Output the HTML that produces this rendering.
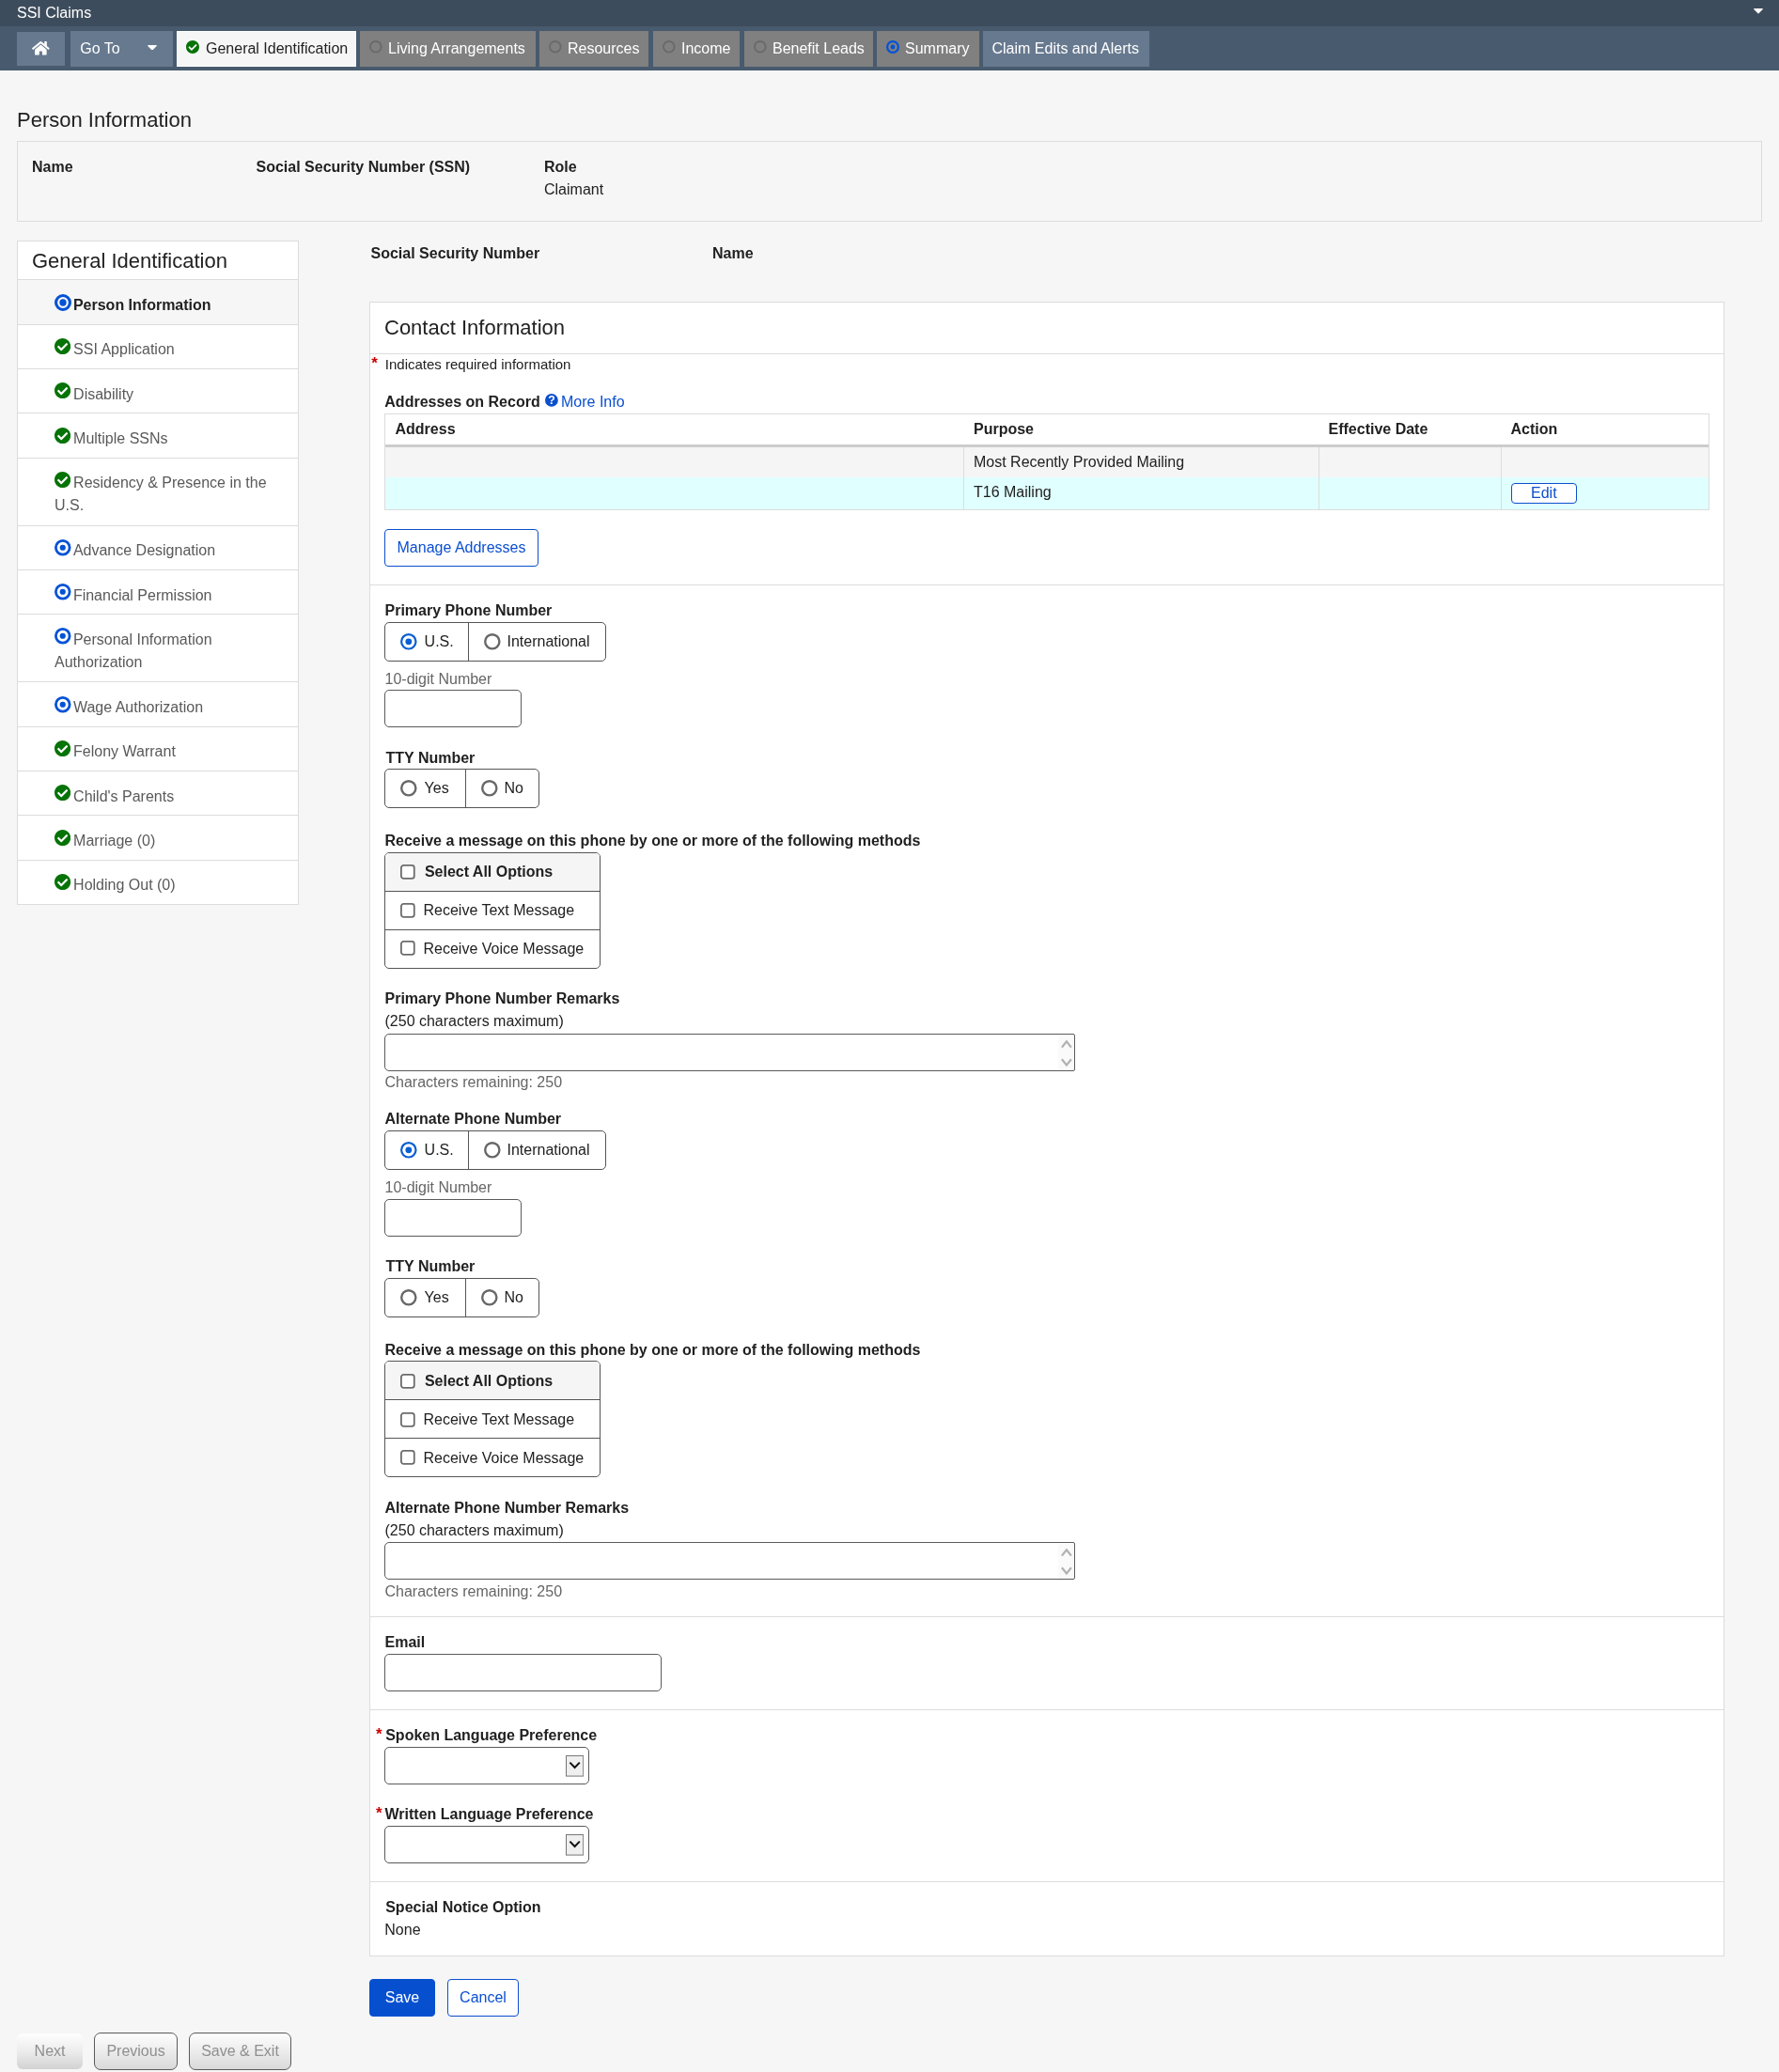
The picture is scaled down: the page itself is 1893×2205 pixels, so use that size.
<!DOCTYPE html>
<html lang="en">
<head>
<meta charset="utf-8">
<title>SSI Claims</title>
<style>
*{box-sizing:border-box;}
html,body{margin:0;padding:0;}
#page{position:absolute;left:0;top:0;width:1893px;height:2205px;will-change:transform;}
body{width:1893px;height:2205px;overflow:hidden;background:#f6f6f6;font-family:"Liberation Sans",Arial,sans-serif;font-size:16px;line-height:24px;color:#212121;position:relative;}
a{color:#0b4fcf;text-decoration:none;}
b,strong,.b{font-weight:700;}
.abs{position:absolute;}
#topbar{position:absolute;left:0;top:0;width:1893px;height:28px;background:#3d4c5c;color:#fff;}
#topbar .ttl{position:absolute;left:18px;top:2px;line-height:24px;}
#topbar .car{position:absolute;left:1866.3px;top:9.2px;}
#nav{position:absolute;left:0;top:28px;width:1893px;height:47px;background:#485a6d;}
.tab{position:absolute;top:5px;height:38px;line-height:24px;color:#fff;background:#808080;white-space:nowrap;font-size:16px;}
.tab.btn{background:#67798f;}
.tab.act{background:#f6f6f6;color:#212121;border:1px solid #fff;}
.tab.act .ic,.tab.act .tx{margin:-1px 0 0 -1px;}
.tab .ic{position:absolute;top:0;left:0;}
.tab .tx{position:absolute;top:7px;}
h1{position:absolute;left:18px;top:112.3px;margin:0;font-size:22px;font-weight:400;line-height:32px;color:#212121;}
#pbox{position:absolute;left:18px;top:150px;width:1857px;height:85.5px;border:1px solid #dcdcdc;background:#f6f6f6;}
#pbox div{position:absolute;white-space:nowrap;}
#side{position:absolute;left:18px;top:256px;width:300px;background:#fff;border:1px solid #dcdcdc;}
#side h2{margin:0;font-size:22px;font-weight:400;line-height:32px;padding:4.5px 15px 4px 15px;height:40.4px;color:#212121;}
#side .it{border-top:1px solid #dcdcdc;padding:14.6px 22px 7.72px 39px;color:#595959;position:relative;}
#side .it.dbl{padding-bottom:8.5px;}
#side .it.cur{background:#f6f6f6;color:#212121;font-weight:700;}
#side .it .ico{display:inline-block;vertical-align:top;margin:-0.4px 2.9px 0 0;}
#panel{position:absolute;left:393px;top:321px;width:1442px;height:1760.5px;background:#fff;border:1px solid #dcdcdc;}
.rule{position:absolute;left:394px;width:1440px;height:1px;background:#dcdcdc;}
.lbl{position:absolute;left:409.5px;font-weight:700;white-space:nowrap;line-height:24px;}
.txt{position:absolute;left:409.5px;white-space:nowrap;line-height:24px;}
.gray{color:#666;}
.req{position:absolute;color:#c00;font-weight:700;font-size:16px;line-height:24px;}
.grp{position:absolute;left:409px;height:41.5px;border:1px solid #555;border-radius:5px;background:#fff;display:flex;}
.grp .c{position:relative;height:100%;padding:0 16px;display:flex;align-items:center;white-space:nowrap;}
.grp .c+.c{border-left:1px solid #555;}
.rad{display:block;margin-right:7.8px;flex:none;margin-left:0.2px;position:relative;top:0.1px;}
.grp .c2 .rad{margin-right:7.1px;}
.inp{position:absolute;left:409px;height:39.5px;border:1px solid #5a5a5a;border-radius:5px;background:#fff;}
.inp.ta{border-top-right-radius:2px;border-bottom-right-radius:2px;overflow:hidden;}
.cbg{position:absolute;left:409px;width:229.8px;height:123.3px;border:1px solid #555;border-radius:5px;background:#fff;overflow:hidden;}
.cbg .r{height:41.2px;padding-left:16.3px;display:flex;align-items:center;white-space:nowrap;}
.cbg .r:last-child{height:40.6px;}
.cbg .r+.r{border-top:1px solid #555;}
.cbg .r.h{background:#f5f5f5;font-weight:700;height:39.4px;}
.cb{display:block;margin-right:8.5px;flex:none;position:relative;top:-0.4px;}
.cbg .r.h .cb{margin-right:9.9px;}
.cbg.alt .r{padding-top:1.8px;}
.btn2{position:absolute;border:1px solid #0b4fcf;border-radius:4px;background:#fff;color:#0b4fcf;text-align:center;white-space:nowrap;}
.gbtn{position:absolute;top:2163px;height:39.7px;line-height:37.7px;border:1px solid #5a5a5a;border-radius:7px;color:#8f8f8f;text-align:center;background:linear-gradient(#fefefe,#d9d9d9);font-size:16px;}

</style>
</head>
<body>
<div id="page">
<div id="topbar"><span class="ttl">SSI Claims</span><svg class="car" style="" width="10" height="5.56" viewBox="8 192 304 169"><path fill="#fff" d="M31.3 192h257.3c17.8 0 26.7 21.5 14.1 34.1L174.1 354.8c-7.800 7.800-20.500 7.800-28.300 0L17.200 226.100C4.600 213.500 13.500 192 31.300 192z"/></svg></div>
<div id="nav">
  <div class="tab btn" style="left:18px;width:51px;top:6px;height:36px;"><svg class="ic" style="left:15.96px;top:8.8px" width="18.72" height="16.64" viewBox="0 0 576 512"><path fill="#fff" d="M280.37 148.26L96 300.11V464a16 16 0 0 0 16 16l112.06-.29a16 16 0 0 0 15.92-16V368a16 16 0 0 1 16-16h64a16 16 0 0 1 16 16v95.64a16 16 0 0 0 16 16.05L464 480a16 16 0 0 0 16-16V300L295.67 148.26a12.190 12.190 0 0 0-15.3 0zM571.6 251.47L488 182.56V44.05a12 12 0 0 0-12-12h-56a12 12 0 0 0-12 12v72.61L318.47 43a48 48 0 0 0-61 0L4.34 251.47a12 12 0 0 0-1.6 16.9l25.5 31A12 12 0 0 0 45.150 301l235.22-193.74a12.190 12.190 0 0 1 15.3 0L530.9 301a12 12 0 0 0 16.9-1.6l25.5-31a12 12 0 0 0-1.7-16.930z"/></svg></div>
  <div class="tab btn" style="left:75px;width:109px;"><span class="tx" style="left:10.3px">Go To</span><svg class="ic" style="left:81.5px;top:14.6px" width="10" height="5.56" viewBox="8 192 304 169"><path fill="#fff" d="M31.3 192h257.3c17.8 0 26.7 21.5 14.1 34.1L174.1 354.8c-7.800 7.800-20.500 7.800-28.300 0L17.200 226.100C4.600 213.500 13.500 192 31.300 192z"/></svg></div>
  <div class="tab act" style="left:188px;width:191px;"><svg class="ic" style="left:9.75px;top:10.15px" width="14" height="14" viewBox="8 8 496 496"><path fill="#067306" d="M504 256c0 136.967-111.033 248-248 248S8 392.967 8 256 119.033 8 256 8s248 111.033 248 248zM227.314 387.314l184-184c6.248-6.248 6.248-16.379 0-22.627l-22.627-22.627c-6.248-6.249-16.379-6.249-22.628 0L216 308.118l-70.059-70.059c-6.248-6.248-16.379-6.248-22.628 0l-22.627 22.627c-6.248 6.248-6.248 16.379 0 22.627l104 104c6.249 6.249 16.379 6.249 22.628.001z"/></svg><span class="tx" style="left:31px">General Identification</span></div>
  <div class="tab" style="left:383px;width:187px;"><svg class="ic" style="overflow:visible;left:10.1px;top:10.2px" width="13.6" height="13.6" viewBox="0 0 13.6 13.6"><circle cx="6.8" cy="6.8" r="5.850" fill="none" stroke="#696969" stroke-width="1.9"/></svg><span class="tx" style="left:30px">Living Arrangements</span></div>
  <div class="tab" style="left:574px;width:116px;"><svg class="ic" style="overflow:visible;left:10.1px;top:10.2px" width="13.6" height="13.6" viewBox="0 0 13.6 13.6"><circle cx="6.8" cy="6.8" r="5.850" fill="none" stroke="#696969" stroke-width="1.9"/></svg><span class="tx" style="left:30px">Resources</span></div>
  <div class="tab" style="left:695px;width:92.2px;"><svg class="ic" style="overflow:visible;left:10.1px;top:10.2px" width="13.6" height="13.6" viewBox="0 0 13.6 13.6"><circle cx="6.8" cy="6.8" r="5.850" fill="none" stroke="#696969" stroke-width="1.9"/></svg><span class="tx" style="left:30px">Income</span></div>
  <div class="tab" style="left:792px;width:137px;"><svg class="ic" style="overflow:visible;left:10.1px;top:10.2px" width="13.6" height="13.6" viewBox="0 0 13.6 13.6"><circle cx="6.8" cy="6.8" r="5.850" fill="none" stroke="#696969" stroke-width="1.9"/></svg><span class="tx" style="left:30px">Benefit Leads</span></div>
  <div class="tab" style="left:933px;width:109px;"><svg class="ic" style="overflow:visible;left:10px;top:10px" width="14" height="14" viewBox="0 0 14 14"><circle cx="7.0" cy="7.0" r="5.900" fill="none" stroke="#0452d6" stroke-width="2.2"/><circle cx="7.0" cy="7.0" r="2.45" fill="#0452d6"/></svg><span class="tx" style="left:30px">Summary</span></div>
  <div class="tab btn" style="left:1046px;width:177px;"><span class="tx" style="left:9.5px">Claim Edits and Alerts</span></div>
</div>

<h1>Person Information</h1>
<div id="pbox">
  <div class="b" style="left:15px;top:14.5px">Name</div>
  <div class="b" style="left:253.5px;top:14.5px">Social Security Number (SSN)</div>
  <div class="b" style="left:560px;top:14.5px">Role</div>
  <div style="left:560px;top:38.5px">Claimant</div>
</div>

<div id="side">
  <h2>General Identification</h2>
  <div class="it cur"><svg class="ico" style="overflow:visible;margin-left:-0.2px;margin-right:2.1px;margin-top:-0.3px;margin-bottom:-0.5px" width="18" height="18" viewBox="0 0 18 18"><circle cx="9.0" cy="9.0" r="7.450" fill="none" stroke="#0452d6" stroke-width="3.1"/><circle cx="9.0" cy="9.0" r="3.65" fill="#0452d6"/></svg>Person Information</div>
  <div class="it"><svg class="ico" style="" width="17.2" height="17.2" viewBox="8 8 496 496"><path fill="#067306" d="M504 256c0 136.967-111.033 248-248 248S8 392.967 8 256 119.033 8 256 8s248 111.033 248 248zM227.314 387.314l184-184c6.248-6.248 6.248-16.379 0-22.627l-22.627-22.627c-6.248-6.249-16.379-6.249-22.628 0L216 308.118l-70.059-70.059c-6.248-6.248-16.379-6.248-22.628 0l-22.627 22.627c-6.248 6.248-6.248 16.379 0 22.627l104 104c6.249 6.249 16.379 6.249 22.628.001z"/></svg>SSI Application</div>
  <div class="it"><svg class="ico" style="" width="17.2" height="17.2" viewBox="8 8 496 496"><path fill="#067306" d="M504 256c0 136.967-111.033 248-248 248S8 392.967 8 256 119.033 8 256 8s248 111.033 248 248zM227.314 387.314l184-184c6.248-6.248 6.248-16.379 0-22.627l-22.627-22.627c-6.248-6.249-16.379-6.249-22.628 0L216 308.118l-70.059-70.059c-6.248-6.248-16.379-6.248-22.628 0l-22.627 22.627c-6.248 6.248-6.248 16.379 0 22.627l104 104c6.249 6.249 16.379 6.249 22.628.001z"/></svg>Disability</div>
  <div class="it"><svg class="ico" style="" width="17.2" height="17.2" viewBox="8 8 496 496"><path fill="#067306" d="M504 256c0 136.967-111.033 248-248 248S8 392.967 8 256 119.033 8 256 8s248 111.033 248 248zM227.314 387.314l184-184c6.248-6.248 6.248-16.379 0-22.627l-22.627-22.627c-6.248-6.249-16.379-6.249-22.628 0L216 308.118l-70.059-70.059c-6.248-6.248-16.379-6.248-22.628 0l-22.627 22.627c-6.248 6.248-6.248 16.379 0 22.627l104 104c6.249 6.249 16.379 6.249 22.628.001z"/></svg>Multiple SSNs</div>
  <div class="it dbl"><svg class="ico" style="" width="17.2" height="17.2" viewBox="8 8 496 496"><path fill="#067306" d="M504 256c0 136.967-111.033 248-248 248S8 392.967 8 256 119.033 8 256 8s248 111.033 248 248zM227.314 387.314l184-184c6.248-6.248 6.248-16.379 0-22.627l-22.627-22.627c-6.248-6.249-16.379-6.249-22.628 0L216 308.118l-70.059-70.059c-6.248-6.248-16.379-6.248-22.628 0l-22.627 22.627c-6.248 6.248-6.248 16.379 0 22.627l104 104c6.249 6.249 16.379 6.249 22.628.001z"/></svg>Residency &amp; Presence in the U.S.</div>
  <div class="it"><svg class="ico" style="overflow:visible;margin-left:0px;margin-right:2.4px;margin-top:-0.5px;margin-bottom:0.2px" width="17.5" height="17.5" viewBox="0 0 17.5 17.5"><circle cx="8.75" cy="8.75" r="7.350" fill="none" stroke="#0452d6" stroke-width="2.8"/><circle cx="8.75" cy="8.75" r="3.1" fill="#0452d6"/></svg>Advance Designation</div>
  <div class="it"><svg class="ico" style="overflow:visible;margin-left:0px;margin-right:2.4px;margin-top:-0.5px;margin-bottom:0.2px" width="17.5" height="17.5" viewBox="0 0 17.5 17.5"><circle cx="8.75" cy="8.75" r="7.350" fill="none" stroke="#0452d6" stroke-width="2.8"/><circle cx="8.75" cy="8.75" r="3.1" fill="#0452d6"/></svg>Financial Permission</div>
  <div class="it dbl"><svg class="ico" style="overflow:visible;margin-left:0px;margin-right:2.4px;margin-top:-0.5px;margin-bottom:0.2px" width="17.5" height="17.5" viewBox="0 0 17.5 17.5"><circle cx="8.75" cy="8.75" r="7.350" fill="none" stroke="#0452d6" stroke-width="2.8"/><circle cx="8.75" cy="8.75" r="3.1" fill="#0452d6"/></svg>Personal Information Authorization</div>
  <div class="it"><svg class="ico" style="overflow:visible;margin-left:0px;margin-right:2.4px;margin-top:-0.5px;margin-bottom:0.2px" width="17.5" height="17.5" viewBox="0 0 17.5 17.5"><circle cx="8.75" cy="8.75" r="7.350" fill="none" stroke="#0452d6" stroke-width="2.8"/><circle cx="8.75" cy="8.75" r="3.1" fill="#0452d6"/></svg>Wage Authorization</div>
  <div class="it"><svg class="ico" style="" width="17.2" height="17.2" viewBox="8 8 496 496"><path fill="#067306" d="M504 256c0 136.967-111.033 248-248 248S8 392.967 8 256 119.033 8 256 8s248 111.033 248 248zM227.314 387.314l184-184c6.248-6.248 6.248-16.379 0-22.627l-22.627-22.627c-6.248-6.249-16.379-6.249-22.628 0L216 308.118l-70.059-70.059c-6.248-6.248-16.379-6.248-22.628 0l-22.627 22.627c-6.248 6.248-6.248 16.379 0 22.627l104 104c6.249 6.249 16.379 6.249 22.628.001z"/></svg>Felony Warrant</div>
  <div class="it"><svg class="ico" style="" width="17.2" height="17.2" viewBox="8 8 496 496"><path fill="#067306" d="M504 256c0 136.967-111.033 248-248 248S8 392.967 8 256 119.033 8 256 8s248 111.033 248 248zM227.314 387.314l184-184c6.248-6.248 6.248-16.379 0-22.627l-22.627-22.627c-6.248-6.249-16.379-6.249-22.628 0L216 308.118l-70.059-70.059c-6.248-6.248-16.379-6.248-22.628 0l-22.627 22.627c-6.248 6.248-6.248 16.379 0 22.627l104 104c6.249 6.249 16.379 6.249 22.628.001z"/></svg>Child&#39;s Parents</div>
  <div class="it"><svg class="ico" style="" width="17.2" height="17.2" viewBox="8 8 496 496"><path fill="#067306" d="M504 256c0 136.967-111.033 248-248 248S8 392.967 8 256 119.033 8 256 8s248 111.033 248 248zM227.314 387.314l184-184c6.248-6.248 6.248-16.379 0-22.627l-22.627-22.627c-6.248-6.249-16.379-6.249-22.628 0L216 308.118l-70.059-70.059c-6.248-6.248-16.379-6.248-22.628 0l-22.627 22.627c-6.248 6.248-6.248 16.379 0 22.627l104 104c6.249 6.249 16.379 6.249 22.628.001z"/></svg>Marriage (0)</div>
  <div class="it"><svg class="ico" style="" width="17.2" height="17.2" viewBox="8 8 496 496"><path fill="#067306" d="M504 256c0 136.967-111.033 248-248 248S8 392.967 8 256 119.033 8 256 8s248 111.033 248 248zM227.314 387.314l184-184c6.248-6.248 6.248-16.379 0-22.627l-22.627-22.627c-6.248-6.249-16.379-6.249-22.628 0L216 308.118l-70.059-70.059c-6.248-6.248-16.379-6.248-22.628 0l-22.627 22.627c-6.248 6.248-6.248 16.379 0 22.627l104 104c6.249 6.249 16.379 6.249 22.628.001z"/></svg>Holding Out (0)</div>
</div>

<div class="lbl" style="left:394.5px;top:257.5px">Social Security Number</div>
<div class="lbl" style="left:758px;top:257.5px">Name</div>

<div id="panel"></div>
<div class="txt" style="left:409px;top:332.7px;font-size:22px;line-height:32px">Contact Information</div>
<div class="rule" style="top:376px"></div>
<div class="req" style="left:395.3px;top:375px;font-size:17px">*</div>
<div class="txt" style="left:409.8px;top:376px;font-size:15px">Indicates required information</div>
<div class="lbl" style="left:409.3px;top:415.9px">Addresses on Record</div>
<svg class="abs" style="left:580px;top:419.4px" width="13.8" height="13.8" viewBox="0 0 14 14"><circle cx="7" cy="7" r="7" fill="#0b4fcf"/><text x="7" y="11.5" text-anchor="middle" font-family="Liberation Sans, sans-serif" font-weight="700" font-size="12.5" fill="#fff">?</text></svg>
<a class="txt" style="left:597px;top:415.9px">More Info</a>

<div id="tbl" class="abs" style="left:409px;top:440px;width:1410px;height:102.7px;border:1px solid #dcdcdc;background:#fff;">
  <div class="abs" style="left:0;top:32.3px;width:1408px;height:2.7px;background:#ccc"></div>
  <div class="abs" style="left:0;top:35px;width:1408px;height:32.3px;background:#f5f5f5"></div>
  <div class="abs" style="left:0;top:67.3px;width:1408px;height:33.4px;background:#e0ffff"></div>
  <div class="abs" style="left:615.2px;top:35px;width:1px;height:65.7px;background:#dcdcdc"></div>
  <div class="abs" style="left:992.7px;top:35px;width:1px;height:65.7px;background:#dcdcdc"></div>
  <div class="abs" style="left:1187.2px;top:35px;width:1px;height:65.7px;background:#dcdcdc"></div>
  <div class="abs b" style="left:10.5px;top:3.8px">Address</div>
  <div class="abs b" style="left:626px;top:3.8px">Purpose</div>
  <div class="abs b" style="left:1003.5px;top:3.8px">Effective Date</div>
  <div class="abs b" style="left:1197.5px;top:3.8px">Action</div>
  <div class="abs" style="left:626px;top:39px">Most Recently Provided Mailing</div>
  <div class="abs" style="left:626px;top:71px">T16 Mailing</div>
  <div class="btn2" style="left:1197.6px;top:73.3px;width:70.5px;height:22px;line-height:20px;border-radius:4px;">Edit</div>
</div>

<div class="btn2" style="left:409px;top:563px;width:164px;height:39.7px;line-height:37.7px;">Manage Addresses</div>
<div class="rule" style="top:622px"></div>

<!-- PRIMARY -->
<div class="lbl" style="top:638.2px">Primary Phone Number</div>
<div class="grp" style="top:662.4px;height:41.3px"><div class="c" style="width:87.6px"><svg class="rad" style="overflow:visible" width="17.6" height="17.6" viewBox="0 0 17.6 17.6"><circle cx="8.8" cy="8.8" r="7.7" fill="#fff" stroke="#0a5fd2" stroke-width="2.2"/><circle cx="8.8" cy="8.8" r="3.4" fill="#0a5fd2"/></svg>U.S.</div><div class="c c2" style="width:146.3px"><svg class="rad" style="overflow:visible" width="17.6" height="17.6" viewBox="0 0 17.6 17.6"><circle cx="8.8" cy="8.8" r="7.6" fill="#fff" stroke="#686868" stroke-width="2.4"/></svg>International</div></div>
<div class="txt gray" style="top:710.8px">10-digit Number</div>
<div class="inp" style="top:734.3px;width:146px"></div>
<div class="lbl" style="left:410.5px;top:794.7px">TTY Number</div>
<div class="grp" style="top:818px;height:41.5px"><div class="c" style="width:84.6px"><svg class="rad" style="overflow:visible" width="17.6" height="17.6" viewBox="0 0 17.6 17.6"><circle cx="8.8" cy="8.8" r="7.6" fill="#fff" stroke="#686868" stroke-width="2.4"/></svg>Yes</div><div class="c c2" style="width:78.6px"><svg class="rad" style="overflow:visible" width="17.6" height="17.6" viewBox="0 0 17.6 17.6"><circle cx="8.8" cy="8.8" r="7.6" fill="#fff" stroke="#686868" stroke-width="2.4"/></svg>No</div></div>
<div class="lbl" style="top:882.9px">Receive a message on this phone by one or more of the following methods</div>
<div class="cbg" style="top:907.3px"><div class="r h"><svg class="cb" style="overflow:visible" width="15.7" height="15.7" viewBox="0 0 15.7 15.7"><rect x="0.9" y="0.9" width="13.9" height="13.9" rx="2.6" fill="#fff" stroke="#6c6c6c" stroke-width="1.8"/></svg>Select All Options</div><div class="r"><svg class="cb" style="overflow:visible" width="15.7" height="15.7" viewBox="0 0 15.7 15.7"><rect x="0.9" y="0.9" width="13.9" height="13.9" rx="2.6" fill="#fff" stroke="#6c6c6c" stroke-width="1.8"/></svg>Receive Text Message</div><div class="r"><svg class="cb" style="overflow:visible" width="15.7" height="15.7" viewBox="0 0 15.7 15.7"><rect x="0.9" y="0.9" width="13.9" height="13.9" rx="2.6" fill="#fff" stroke="#6c6c6c" stroke-width="1.8"/></svg>Receive Voice Message</div></div>
<div class="lbl" style="top:1050.6px">Primary Phone Number Remarks</div>
<div class="txt" style="top:1074.5px">(250 characters maximum)</div>
<div class="inp ta" style="top:1099.5px;width:734.6px;height:40.1px"><svg class="abs" style="right:0.6px;top:1px" width="16.5" height="38" viewBox="0 0 16.5 38"><rect width="16.5" height="38" fill="#fafafa"/><path d="M3.9 12.6 L8.9 6.4 L13.9 12.6 M3.9 25.2 L8.9 31.4 L13.9 25.2" fill="none" stroke="#b2b2b2" stroke-width="2.3"/></svg></div>
<div class="txt gray" style="top:1139.7px">Characters remaining: 250</div>

<!-- ALTERNATE -->
<div class="lbl" style="top:1178.9px">Alternate Phone Number</div>
<div class="grp" style="top:1203px;height:42px"><div class="c" style="width:87.6px"><svg class="rad" style="overflow:visible" width="17.6" height="17.6" viewBox="0 0 17.6 17.6"><circle cx="8.8" cy="8.8" r="7.7" fill="#fff" stroke="#0a5fd2" stroke-width="2.2"/><circle cx="8.8" cy="8.8" r="3.4" fill="#0a5fd2"/></svg>U.S.</div><div class="c c2" style="width:146.3px"><svg class="rad" style="overflow:visible" width="17.6" height="17.6" viewBox="0 0 17.6 17.6"><circle cx="8.8" cy="8.8" r="7.6" fill="#fff" stroke="#686868" stroke-width="2.4"/></svg>International</div></div>
<div class="txt gray" style="top:1251.5px">10-digit Number</div>
<div class="inp" style="top:1276.1px;width:146px"></div>
<div class="lbl" style="left:410.5px;top:1335.6px">TTY Number</div>
<div class="grp" style="top:1360.3px;height:41.4px"><div class="c" style="width:84.6px"><svg class="rad" style="overflow:visible" width="17.6" height="17.6" viewBox="0 0 17.6 17.6"><circle cx="8.8" cy="8.8" r="7.6" fill="#fff" stroke="#686868" stroke-width="2.4"/></svg>Yes</div><div class="c c2" style="width:78.6px"><svg class="rad" style="overflow:visible" width="17.6" height="17.6" viewBox="0 0 17.6 17.6"><circle cx="8.8" cy="8.8" r="7.6" fill="#fff" stroke="#686868" stroke-width="2.4"/></svg>No</div></div>
<div class="lbl" style="top:1424.9px">Receive a message on this phone by one or more of the following methods</div>
<div class="cbg alt" style="top:1448.4px"><div class="r h"><svg class="cb" style="overflow:visible" width="15.7" height="15.7" viewBox="0 0 15.7 15.7"><rect x="0.9" y="0.9" width="13.9" height="13.9" rx="2.6" fill="#fff" stroke="#6c6c6c" stroke-width="1.8"/></svg>Select All Options</div><div class="r"><svg class="cb" style="overflow:visible" width="15.7" height="15.7" viewBox="0 0 15.7 15.7"><rect x="0.9" y="0.9" width="13.9" height="13.9" rx="2.6" fill="#fff" stroke="#6c6c6c" stroke-width="1.8"/></svg>Receive Text Message</div><div class="r"><svg class="cb" style="overflow:visible" width="15.7" height="15.7" viewBox="0 0 15.7 15.7"><rect x="0.9" y="0.9" width="13.9" height="13.9" rx="2.6" fill="#fff" stroke="#6c6c6c" stroke-width="1.8"/></svg>Receive Voice Message</div></div>
<div class="lbl" style="top:1592.6px">Alternate Phone Number Remarks</div>
<div class="txt" style="top:1616.5px">(250 characters maximum)</div>
<div class="inp ta" style="top:1640.8px;width:734.6px;height:40.1px"><svg class="abs" style="right:0.6px;top:1px" width="16.5" height="38" viewBox="0 0 16.5 38"><rect width="16.5" height="38" fill="#fafafa"/><path d="M3.9 12.6 L8.9 6.4 L13.9 12.6 M3.9 25.2 L8.9 31.4 L13.9 25.2" fill="none" stroke="#b2b2b2" stroke-width="2.3"/></svg></div>
<div class="txt gray" style="top:1682.3px">Characters remaining: 250</div>
<div class="rule" style="top:1720px"></div>

<div class="lbl" style="top:1735.9px">Email</div>
<div class="inp" style="top:1760.3px;width:295px"></div>
<div class="rule" style="top:1819px"></div>

<div class="req" style="left:399.9px;top:1834px;font-size:17px">*</div>
<div class="lbl" style="left:410.2px;top:1834.8px">Spoken Language Preference</div>
<div class="inp sel" style="top:1859.2px;width:218px"><svg class="abs" style="left:192px;top:8px" width="19.2" height="22.6" viewBox="0 0 19.2 22.6"><rect x="0.5" y="0.5" width="18.2" height="21.6" fill="#efefef" stroke="#767676"/><path d="M4.4 7.6 L9.6 13 L14.8 7.6" fill="none" stroke="#111" stroke-width="2"/></svg></div>
<div class="req" style="left:399.9px;top:1917.7px;font-size:17px">*</div>
<div class="lbl" style="left:409.5px;top:1918.5px">Written Language Preference</div>
<div class="inp sel" style="top:1943.4px;width:218px"><svg class="abs" style="left:192px;top:8px" width="19.2" height="22.6" viewBox="0 0 19.2 22.6"><rect x="0.5" y="0.5" width="18.2" height="21.6" fill="#efefef" stroke="#767676"/><path d="M4.4 7.6 L9.6 13 L14.8 7.6" fill="none" stroke="#111" stroke-width="2"/></svg></div>
<div class="rule" style="top:2002px"></div>
<div class="lbl" style="left:410.2px;top:2017.9px">Special Notice Option</div>
<div class="txt" style="left:409.3px;top:2041.5px">None</div>

<div class="btn2" style="left:393px;top:2106px;width:70px;height:40px;line-height:38px;background:#0650d0;border-color:#0650d0;color:#fff;">Save</div>
<div class="btn2" style="left:476px;top:2106px;width:76px;height:40px;line-height:38px;">Cancel</div>

<div class="gbtn" style="left:18.2px;top:2163.9px;height:37.9px;width:69.7px;border:0;color:#8f8f8f;line-height:37.5px;border-radius:6px;background:linear-gradient(#fefefe,#ececec 50%,#d2d2d2)">Next</div>
<div class="gbtn" style="left:100px;width:89px;">Previous</div>
<div class="gbtn" style="left:201px;width:109px;">Save &amp; Exit</div>

</div>
</body>
</html>
